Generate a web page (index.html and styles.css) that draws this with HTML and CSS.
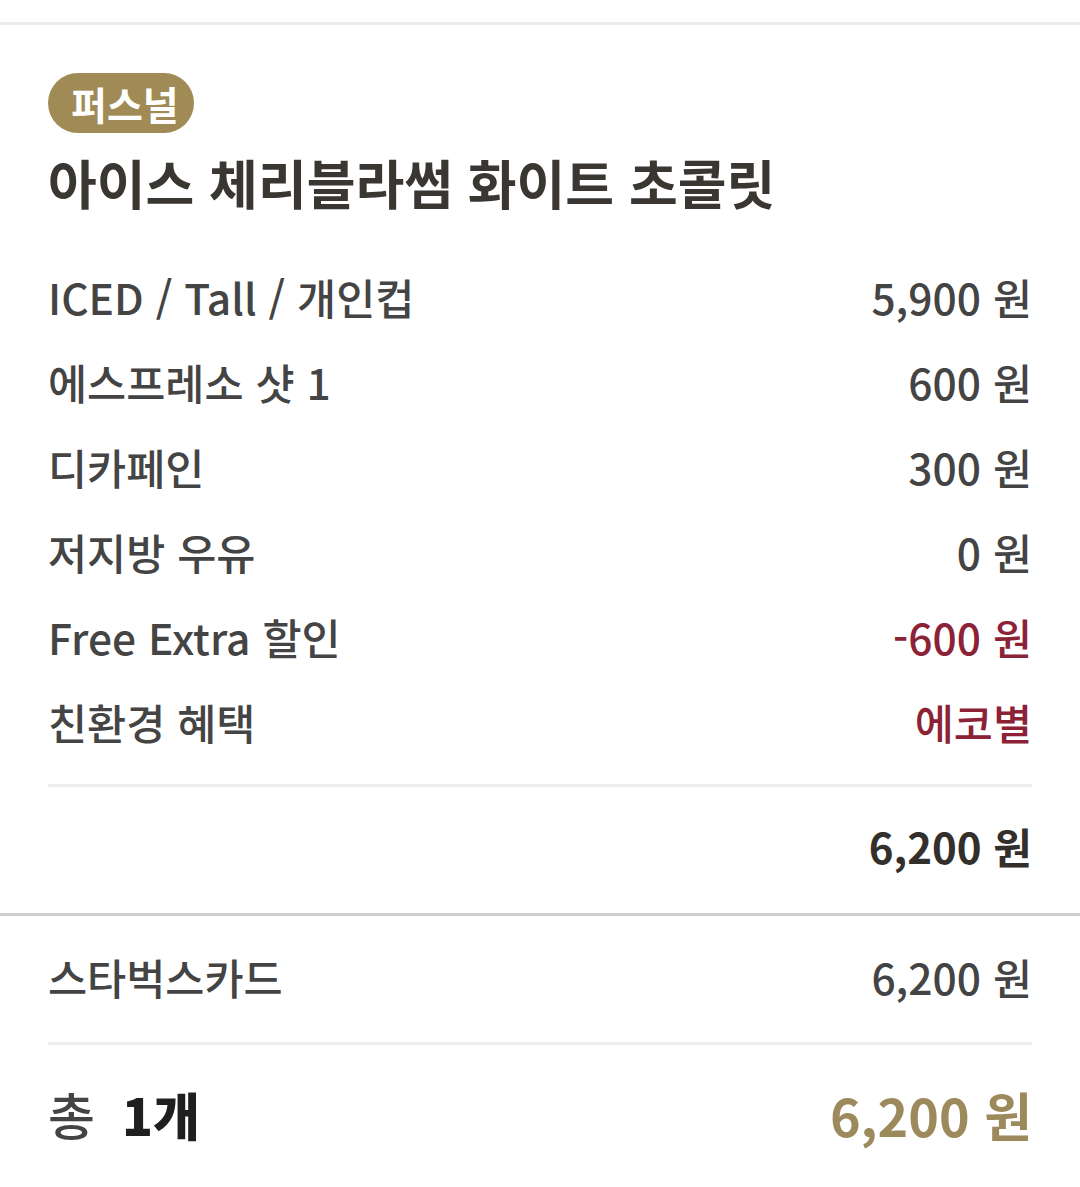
FILE: index.html
```html
<!DOCTYPE html>
<html lang="ko">
<head>
<meta charset="utf-8">
<link rel="stylesheet" href="styles.css">
</head>
<body>
<div class="page">
  <div class="top-gap"></div>
  <section class="item">
    <span class="badge">퍼스널</span>
    <h1 class="title">아이스 체리블라썸 화이트 초콜릿</h1>
    <ul class="options">
      <li class="row"><span>ICED / Tall / 개인컵</span><span>5,900 원</span></li>
      <li class="row"><span>에스프레소 샷 1</span><span>600 원</span></li>
      <li class="row"><span>디카페인</span><span>300 원</span></li>
      <li class="row"><span>저지방 우유</span><span>0 원</span></li>
      <li class="row"><span>Free Extra 할인</span><span class="red">-600 원</span></li>
      <li class="row"><span>친환경 혜택</span><span class="red">에코별</span></li>
    </ul>
    <div class="subtotal">6,200 원</div>
  </section>
  <section class="payment">
    <div class="row pay-row"><span>스타벅스카드</span><span>6,200 원</span></div>
    <div class="total">
      <span class="count"><span class="count-label">총</span><b>1개</b></span>
      <span class="total-price">6,200 원</span>
    </div>
  </section>
</div>
</body>
</html>
```

FILE: styles.css
```css
* { box-sizing: border-box; }
html, body { margin: 0; padding: 0; background: #fff; }
body {
  font-family: "Noto Sans CJK KR", "Noto Sans", sans-serif;
  color: #444444;
  width: 1080px;
}
.top-gap {
  height: 25px;
  border-bottom: 3px solid #ececec;
}
.item {
  padding: 48px 48px 0;
  border-bottom: 3px solid #cfcfcf;
}
.badge {
  display: inline-block;
  height: 60px;
  line-height: 60px;
  padding: 0 15px 0 23px;
  border-radius: 30px;
  background: #a08a55;
  color: #fff;
  font-size: 39px;
  font-weight: 700;
}
.title {
  margin: 19px 0 0;
  font-size: 53px;
  line-height: 60px;
  font-weight: 700;
  color: #3a3632;
}
.options {
  list-style: none;
  margin: 42px 0 0;
  padding: 0 0 20px;
  border-bottom: 3px solid #eeeeee;
}
.row {
  display: flex;
  justify-content: space-between;
  height: 85px;
  line-height: 85px;
  font-size: 42.5px;
  font-weight: 500;
  color: #444444;
}
.red { color: #8c2236; }
.subtotal {
  text-align: right;
  font-size: 42px;
  font-weight: 700;
  line-height: 80px;
  margin: 19px 0 0;
  padding-bottom: 27px;
  color: #33302c;
}
.payment {
  padding: 18px 48px 0;
}
.pay-row {
  padding-bottom: 23px;
  height: auto;
  border-bottom: 3px solid #eeeeee;
}
.total {
  display: flex;
  justify-content: space-between;
  align-items: center;
  height: 100px;
  margin-top: 19px;
}
.count { font-size: 51px; font-weight: 700; }
.count-label { color: #444; font-weight: 500; margin-right: 27px; }
.count b { color: #1f1f1f; }
.total-price {
  font-size: 52px;
  font-weight: 700;
  color: #9d8a5c;
}
```
